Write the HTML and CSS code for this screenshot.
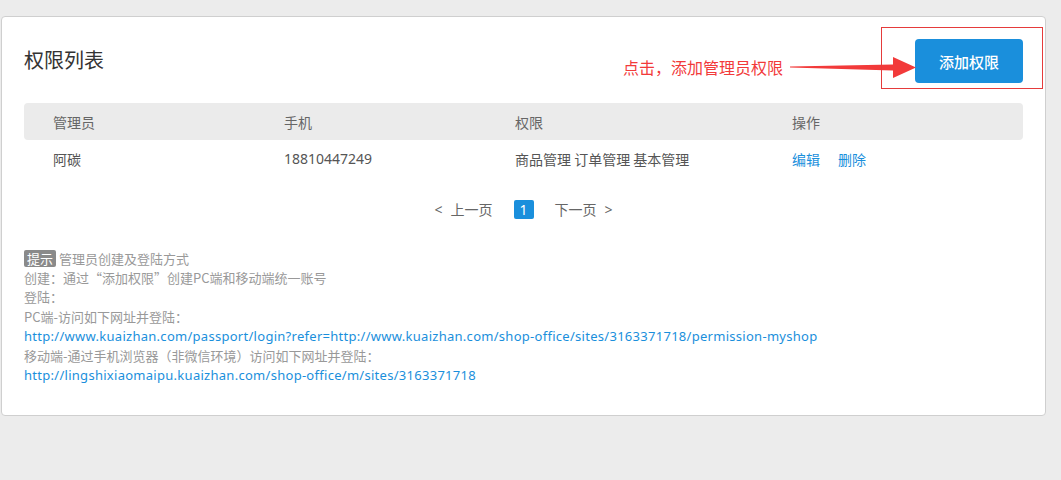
FILE: index.html
```html
<!DOCTYPE html>
<html lang="zh-CN">
<head>
<meta charset="utf-8">
<title>权限列表</title>
<link rel="stylesheet" href="styles.css">
</head>
<body>
<div class="card">
  <div class="head">
    <h1 class="title">权限列表</h1>
    <button class="btn">添加权限</button>
  </div>
  <div class="table">
    <div class="row thead">
      <div>管理员</div><div>手机</div><div>权限</div><div>操作</div>
    </div>
    <div class="row">
      <div>阿碳</div><div>18810447249</div><div>商品管理 订单管理 基本管理</div>
      <div class="ops"><a class="link">编辑</a><a class="link">删除</a></div>
    </div>
  </div>
  <div class="pager">
    <span class="pg"><span class="chev">&lt;</span>上一页</span>
    <span class="cur">1</span>
    <span class="pg">下一页<span class="chev">&gt;</span></span>
  </div>
  <div class="tips">
    <div><span class="badge">提示</span> 管理员创建及登陆方式</div>
    <div>创建：通过“添加权限”创建PC端和移动端统一账号</div>
    <div>登陆：</div>
    <div>PC端-访问如下网址并登陆：</div>
    <div><a class="link url">http://www.kuaizhan.com/passport/login?refer=http://www.kuaizhan.com/shop-office/sites/3163371718/permission-myshop</a></div>
    <div>移动端-通过手机浏览器（非微信环境）访问如下网址并登陆：</div>
    <div><a class="link url">http://lingshixiaomaipu.kuaizhan.com/shop-office/m/sites/3163371718</a></div>
  </div>
</div>
<div class="note">点击，添加管理员权限</div>
<svg class="arrow" width="130" height="24" viewBox="0 0 130 24">
  <polygon points="0,9.6 103,7.5 103,0 126,10.5 103,21 103,13.5 0,10.6" fill="#f23a3a"/>
</svg>
<div class="mark"></div>
</body>
</html>
```
FILE: styles.css
```css
html, body {
  margin: 0;
  padding: 0;
}
body {
  background: #ececec;
  padding: 16px 0 0 1px;
  height: 480px;
  box-sizing: border-box;
  font-family: "Noto Sans CJK SC", sans-serif;
  color: #555;
  position: relative;
  overflow: hidden;
  text-spacing-trim: space-all;
}
.card {
  width: 1045px;
  height: 400px;
  box-sizing: border-box;
  background: #fff;
  border: 1px solid #cfcfcf;
  border-radius: 4px;
  padding: 22px 22px 0 22px;
}
.head {
  display: flex;
  align-items: center;
  justify-content: space-between;
  height: 44px;
}
.title {
  margin: 0 0 3px 0;
  font-size: 20px;
  font-weight: 400;
  color: #333;
}
.btn {
  width: 108px;
  height: 44px;
  border: 0;
  border-radius: 4px;
  background: #1a8fdc;
  color: #fff;
  font-family: "Noto Sans CJK SC", sans-serif;
  font-size: 15px;
  font-weight: 500;
  padding: 0;
}
.table {
  margin-top: 20px;
  font-size: 14px;
}
.row {
  display: grid;
  grid-template-columns: 231px 231px 277px 1fr;
  padding-left: 29px;
  height: 37px;
  align-items: center;
  color: #555;
}
.row > div:nth-child(2) {
  font-family: "Noto Sans", sans-serif;
}
.thead {
  background: #ebebeb;
  border-radius: 4px;
  color: #666;
}
.row > .ops {
  display: flex;
  gap: 18px;
  font-family: "Noto Sans CJK SC", sans-serif;
}
.link {
  color: #1a8fdc;
  text-decoration: none;
}
.pager {
  margin-top: 23px;
  display: flex;
  justify-content: center;
  align-items: center;
  gap: 21px;
  font-size: 14px;
  line-height: 19px;
  color: #666;
}
.pg {
  display: inline-flex;
  align-items: center;
  gap: 8px;
}
.chev {
  font-family: "Noto Sans", sans-serif;
}
.cur {
  display: inline-block;
  width: 20px;
  height: 19px;
  background: #1a8fdc;
  color: #fff;
  border-radius: 2px;
  text-align: center;
  font-family: "Noto Sans", sans-serif;
  font-size: 14px;
}
.tips {
  margin-top: 30px;
  font-size: 13px;
  line-height: 19.2px;
  color: #999;
}
.url {
  font-family: "Noto Sans", sans-serif;
  letter-spacing: 0.28px;
}
.badge {
  display: inline-block;
  background: #8a8a8a;
  color: #fff;
  border-radius: 2px;
  padding: 0 3px;
  line-height: 17px;
}
.note {
  position: absolute;
  left: 623px;
  top: 56px;
  font-size: 16px;
  line-height: 22px;
  color: #f23a3a;
}
.arrow {
  position: absolute;
  left: 790px;
  top: 57px;
}
.mark {
  position: absolute;
  left: 881px;
  top: 27px;
  width: 160px;
  height: 60px;
  border: 1px solid #e53b3b;
}
```
